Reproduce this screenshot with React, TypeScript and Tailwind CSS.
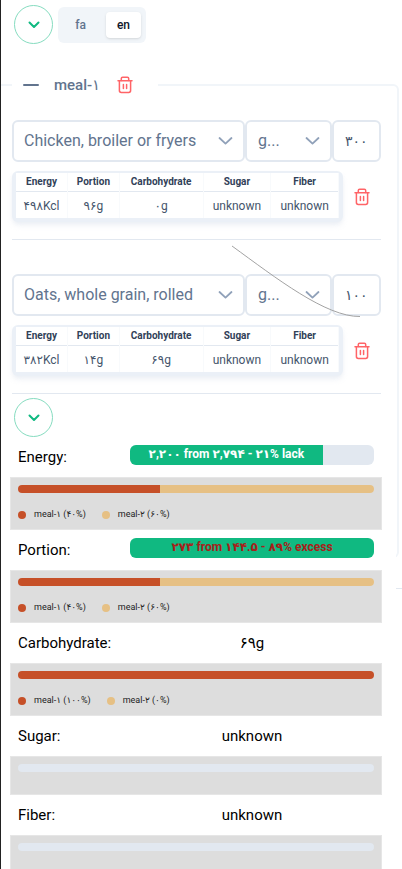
import { useState } from "react";

function TrashIcon() {
  return (
    <svg
      width="16"
      height="18"
      viewBox="0 0 16 18"
      fill="none"
      stroke="currentColor"
      strokeWidth="1.5"
      strokeLinecap="round"
      strokeLinejoin="round"
      aria-hidden="true"
    >
      <path d="M1 4.7h14" />
      <path d="M4.3 4.5V2.6Q4.3 1.3 5.6 1.3h4.8Q11.7 1.3 11.7 2.6v1.9" />
      <path d="M2.4 4.9v9.6Q2.4 16.4 4.3 16.4h7.4Q13.6 16.4 13.6 14.5V4.9" />
      <path d="M6.4 8.6v4M9.6 8.6v4" />
    </svg>
  );
}

function SelectChevron() {
  return (
    <svg
      className="pointer-events-none absolute right-3 top-1/2 -translate-y-1/2 text-slate-400"
      width="15"
      height="10"
      viewBox="0 0 15 10"
      fill="none"
      stroke="currentColor"
      strokeWidth="1.8"
      strokeLinecap="round"
      strokeLinejoin="round"
      aria-hidden="true"
    >
      <path d="M1.5 2L7.5 7.6L13.5 2" />
    </svg>
  );
}

function ExpandButton({ label }: { label: string }) {
  return (
    <button
      type="button"
      aria-label={label}
      className="flex size-[39px] shrink-0 items-center justify-center rounded-full border border-[#86dcc0] bg-white text-[#10b981]"
    >
      <svg width="12" height="8" viewBox="0 0 12 8" fill="none" stroke="currentColor" strokeWidth="2" strokeLinecap="round" strokeLinejoin="round" aria-hidden="true">
        <path d="M1.5 1.5L6 6L10.5 1.5" />
      </svg>
    </button>
  );
}

function LanguageToggle() {
  const [lang, setLang] = useState("en");
  return (
    <div className="flex h-9 rounded-md bg-slate-100 p-[5px] text-xs font-medium">
      {["fa", "en"].map((code) => (
        <button
          key={code}
          type="button"
          onClick={() => setLang(code)}
          aria-pressed={lang === code}
          className={
            lang === code
              ? "ml-1 w-[35px] rounded bg-white font-medium text-slate-900 shadow-sm"
              : "w-[39px] pr-1 text-slate-500"
          }
        >
          {code}
        </button>
      ))}
    </div>
  );
}

type Food = {
  id: string;
  name: string;
  amount: string;
  values: string[];
};

const columns = [
  { name: "Energy", width: "w-[16%]" },
  { name: "Portion", width: "w-[16%]" },
  { name: "Carbohydrate", width: "w-[26%]" },
  { name: "Sugar", width: "w-[21%]" },
  { name: "Fiber", width: "w-[21%]" },
];

const foods: Food[] = [
  { id: "chicken", name: "Chicken, broiler or fryers", amount: "۳۰۰", values: ["۴۹۸Kcl", "۹۶g", "۰g", "unknown", "unknown"] },
  { id: "oats", name: "Oats, whole grain, rolled", amount: "۱۰۰", values: ["۳۸۲Kcl", "۱۴g", "۶۹g", "unknown", "unknown"] },
];

function FoodEntry({ food }: { food: Food }) {
  return (
    <div className="border-b border-slate-200 pb-[17px]">
      <div className="flex">
        <div className="relative min-w-0 flex-1">
          <select aria-label="Food" className="h-[42px] w-full appearance-none truncate rounded-md border-2 border-slate-200 bg-white pl-[10px] pr-8 text-base text-slate-500">
            <option>{food.name}</option>
          </select>
          <SelectChevron />
        </div>
        <div className="relative w-[87px]">
          <select aria-label="Unit" className="h-[42px] w-full appearance-none rounded-md border-2 border-slate-200 bg-white pl-[11px] pr-8 text-base text-slate-500">
            <option>g...</option>
          </select>
          <SelectChevron />
        </div>
        <input
          aria-label="Amount"
          defaultValue={food.amount}
          className="h-[42px] w-[49px] rounded-md border-2 border-slate-200 bg-white pl-[11px] text-sm font-medium text-slate-600"
        />
      </div>
      <div className="mt-[9px] flex items-center">
        <div className="min-w-0 flex-1 rounded-md bg-[#ebf0f7] px-1 pt-[2px] pb-1 shadow-md shadow-slate-200/60">
          <table className="w-full table-fixed border-collapse bg-white text-center">
            <thead>
              <tr className="h-[18px] border-b border-slate-200 text-[10px] leading-4 text-slate-700">
                {columns.map((column) => (
                  <th key={column.name} scope="col" className={`${column.width} border-r border-slate-50 font-bold`}>
                    {column.name}
                  </th>
                ))}
              </tr>
            </thead>
            <tbody>
              <tr className="h-[27px] text-xs leading-4 text-slate-600">
                {food.values.map((value, i) => (
                  <td key={i} className="border-r border-slate-50 pt-[2px]">
                    {value}
                  </td>
                ))}
              </tr>
            </tbody>
          </table>
        </div>
        <button type="button" aria-label={`Delete ${food.name}`} className="flex w-[38px] justify-center text-red-400">
          <TrashIcon />
        </button>
      </div>
    </div>
  );
}

type Share = { meal: string; percent: number; text: string };

type Nutrient = {
  name: string;
  value?: string;
  progress?: { percent: number; text: string; excess: boolean };
  shares: Share[];
};

const nutrients: Nutrient[] = [
  {
    name: "Energy",
    progress: { percent: 79, text: "۲,۲۰۰ from ۲,۷۹۴ - ۲۱% lack", excess: false },
    shares: [
      { meal: "meal-۱", percent: 40, text: "۴۰%" },
      { meal: "meal-۲", percent: 60, text: "۶۰%" },
    ],
  },
  {
    name: "Portion",
    progress: { percent: 100, text: "۲۷۳ from ۱۴۴.۵ - ۸۹% excess", excess: true },
    shares: [
      { meal: "meal-۱", percent: 40, text: "۴۰%" },
      { meal: "meal-۲", percent: 60, text: "۶۰%" },
    ],
  },
  {
    name: "Carbohydrate",
    value: "۶۹g",
    shares: [
      { meal: "meal-۱", percent: 100, text: "۱۰۰%" },
      { meal: "meal-۲", percent: 0, text: "۰%" },
    ],
  },
  { name: "Sugar", value: "unknown", shares: [] },
  { name: "Fiber", value: "unknown", shares: [] },
];

const barColors = ["bg-[#c65028]", "bg-[#e6c084]"];

function NutrientSummary({ nutrient }: { nutrient: Nutrient }) {
  const { name, value, progress, shares } = nutrient;
  return (
    <section>
      <div className="flex h-10 px-2 pt-2">
        <h2 className="w-28 shrink-0 text-[15px] leading-6 text-black">{name}:</h2>
        {progress ? (
          <div className="h-5 flex-1 overflow-hidden rounded-md bg-slate-200">
            <div
              className={`h-full whitespace-nowrap bg-[#10b981] text-center text-xs font-bold leading-[18px] ${progress.excess ? "text-[#a8201a]" : "text-white"}`}
              style={{ width: `${progress.percent}%` }}
            >
              {progress.text}
            </div>
          </div>
        ) : (
          <p className="flex-1 text-center text-[15px] leading-6 text-black">{value}</p>
        )}
      </div>
      <div className="border border-[#e6e6e6] bg-[#dddddd] p-[7px]">
        <div className="flex h-2 overflow-hidden rounded-full bg-slate-200">
          {shares.map((share, i) => (
            <div key={share.meal} className={barColors[i]} style={{ width: `${share.percent}%` }} />
          ))}
        </div>
        {shares.length > 0 ? (
          <ul className="mt-[14px] flex h-[15px] items-center gap-4 text-[9px] leading-[15px] text-[#222222]">
            {shares.map((share, i) => (
              <li key={share.meal} className="flex items-center gap-2">
                <span className={`size-2 rounded-full ${barColors[i]}`} />
                {share.meal} ({share.text})
              </li>
            ))}
          </ul>
        ) : (
          <div className="h-[15px]" />
        )}
      </div>
    </section>
  );
}

export default function App() {
  return (
    <div className="h-screen overflow-hidden border-l border-[#222222] bg-white font-[Roboto,'DejaVu_Sans',sans-serif]">
      <header className="flex items-center gap-[5px] pl-[13px] pt-[5px]">
        <ExpandButton label="Expand options" />
        <LanguageToggle />
      </header>

      <main>
        <fieldset className="relative mr-[3px] mt-[31px] rounded-r-md border-2 border-l-0 border-slate-100 pb-[162px] pl-[11px] pr-4">
          <legend className="h-5">
            <span className="flex h-5 w-[146px] items-center pl-[11px] text-slate-500">
              <span className="h-[2px] w-4 rounded bg-slate-500" />
              <span className="ml-[15px] text-[15px] font-medium leading-5">meal-۱</span>
              <button type="button" aria-label="Delete meal" className="ml-[17px] text-red-400">
                <TrashIcon />
              </button>
            </span>
          </legend>
          <div className="flex flex-col gap-[34px] pt-[25px]">
            {foods.map((food) => (
              <FoodEntry key={food.id} food={food} />
            ))}
          </div>
          {/* Connector stroke floating over the entries */}
          <svg
            className="pointer-events-none absolute right-[36px] top-[150px]"
            width="130"
            height="73"
            viewBox="0 0 130 73"
            fill="none"
            stroke="#a3a3a3"
            strokeWidth="1"
            aria-hidden="true"
          >
            <path d="M1 1C45 33 95 72 129 71.500" />
          </svg>
        </fieldset>
        <hr className="mt-[30px] border-slate-200" />

        <div className="relative -mt-[191px] mr-[6px] bg-white pl-[9px] pr-[14px]">
          <div className="pl-1">
            <ExpandButton label="Expand summary" />
          </div>
          {nutrients.map((nutrient) => (
            <NutrientSummary key={nutrient.name} nutrient={nutrient} />
          ))}
        </div>
      </main>
    </div>
  );
}
